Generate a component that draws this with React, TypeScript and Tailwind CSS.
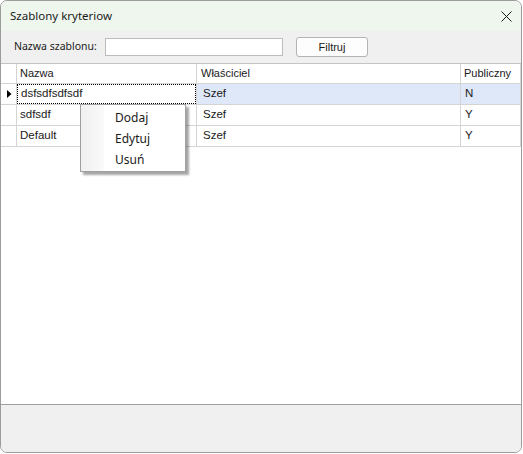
import React from "react";

const gridLine = "border-[#d4d4d4]";

function Arrow() {
  return (
    <svg width="5" height="8" viewBox="0 0 5 8" className="block">
      <path d="M0 0 L4.5 4 L0 8 Z" fill="#000" />
    </svg>
  );
}

const rows = [
  { name: "dsfsdfsdfsdf", owner: "Szef", pub: "N", selected: true },
  { name: "sdfsdf", owner: "Szef", pub: "Y", selected: false },
  { name: "Default", owner: "Szef", pub: "Y", selected: false },
];

export default function App() {
  return (
    <div className="w-[523px] h-[454px] bg-white relative" style={{ fontFamily: '"Noto Sans", sans-serif' }}>
      <div className="w-[522px] h-[453px] rounded-[7px] border border-[#9c9c9c] overflow-hidden flex flex-col bg-[#f0f0f0]">
        {/* Title bar */}
        <div className="h-[30px] shrink-0 bg-[#eef6ee] flex items-center justify-between pl-[9px] pr-[8px]">
          <span className="text-[11.5px] text-[#1a1a1a] leading-none">Szablony kryteriow</span>
          <svg width="11" height="11" viewBox="0 0 11 11" className="mr-[1px]">
            <path d="M0.5 0.5 L10.5 10.5 M10.5 0.5 L0.5 10.5" stroke="#1a1a1a" strokeWidth="1" />
          </svg>
        </div>
        {/* Toolbar */}
        <div className="h-[32px] shrink-0 bg-[#f0f0f0] flex items-center pl-[13px]">
          <span className="text-[10.5px] text-[#1a1a1a] w-[91px]">Nazwa szablonu:</span>
          <div className="w-[178px] h-[18px] bg-white border border-[#bcbcbc]" />
          <div className="ml-[13px] w-[72px] h-[20px] rounded-[3px] border border-[#b4b4b4] bg-[#fdfdfd] flex items-center justify-center">
            <span className="text-[11px] text-[#1a1a1a] leading-none" style={{ fontFamily: '"Liberation Sans", sans-serif' }}>Filtruj</span>
          </div>
        </div>
        {/* Grid */}
        <div
          className="flex-1 bg-white border-t border-b border-t-[#c4c4c4] border-b-[#a0a0a0] relative"
          style={{ fontFamily: '"Liberation Sans", sans-serif' }}
        >
          <div className={`flex h-[20px] border-b ${gridLine} text-[11px] text-[#1a1a1a]`}>
            <div className={`w-[16px] border-r ${gridLine}`} />
            <div className={`w-[180px] border-r ${gridLine} pl-[3px] flex items-center`}>Nazwa</div>
            <div className={`w-[264px] border-r ${gridLine} pl-[4px] flex items-center`}>Właściciel</div>
            <div className={`w-[60px] border-r ${gridLine} pl-[3px] flex items-center`}>Publiczny</div>
          </div>
          {rows.map((r) => (
            <div key={r.name} className={`flex h-[21px] border-b ${gridLine} text-[11.5px] text-[#1a1a1a]`}>
              <div className={`w-[16px] border-r ${gridLine} flex items-center pl-[6px]`}>{r.selected && <Arrow />}</div>
              <div className={`w-[180px] border-r ${gridLine} flex`}>
                <div
                  className={`flex-1 flex items-center pl-[3px] ${r.selected ? "border border-dotted border-black pl-[2px]" : ""}`}
                >
                  {r.name}
                </div>
              </div>
              <div className={`w-[264px] border-r ${gridLine} pl-[6px] flex items-center ${r.selected ? "bg-[#dfe8f9]" : ""}`}>
                {r.owner}
              </div>
              <div className={`w-[60px] border-r ${gridLine} pl-[4px] flex items-center ${r.selected ? "bg-[#dfe8f9]" : ""}`}>
                {r.pub}
              </div>
            </div>
          ))}
        </div>
        {/* Bottom panel */}
        <div className="h-[47px] shrink-0 bg-[#f0f0f0]" />
      </div>

      {/* Context menu */}
      <div
        className="absolute left-[80px] top-[104px] w-[106px] h-[68px] bg-white border border-[#a0a0a0] flex"
        style={{ boxShadow: "3px 3px 2px rgba(0,0,0,0.35)" }}
      >
        <div className="w-[23px] bg-gradient-to-r from-[#f0f0f0] to-[#fafafa]" />
        <div className="flex-1 flex flex-col pt-[2px] pl-[11px] text-[12px] text-[#1a1a1a]">
          <div className="h-[22px] flex items-center">Dodaj</div>
          <div className="h-[22px] flex items-center">Edytuj</div>
          <div className="h-[22px] flex items-center">Usuń</div>
        </div>
      </div>
    </div>
  );
}
